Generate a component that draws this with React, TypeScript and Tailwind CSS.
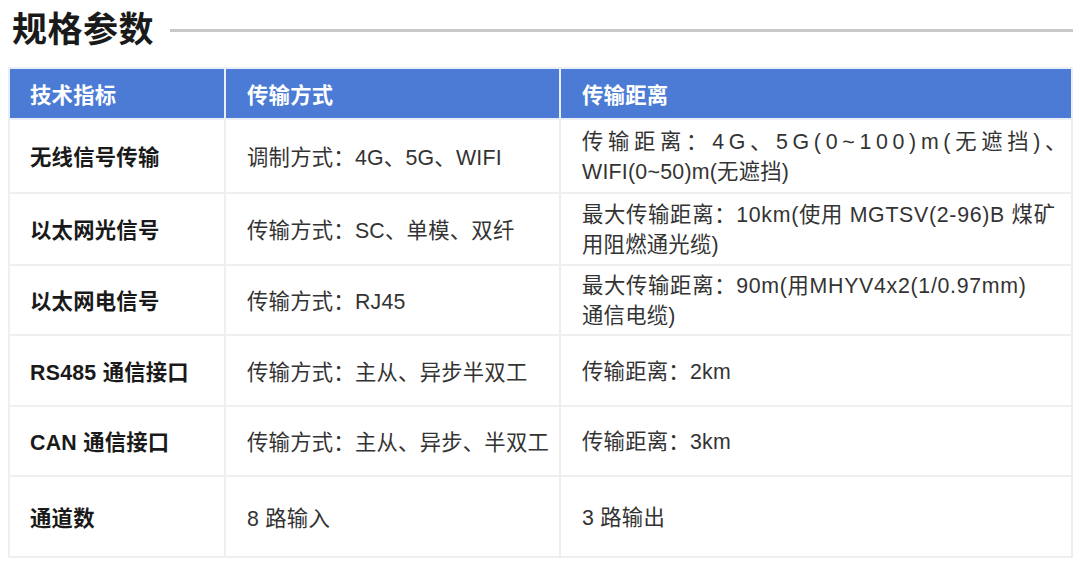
import React from 'react';

const rows = [
  {
    name: '无线信号传输',
    mode: '调制方式：4G、5G、WIFI',
    dist: (
      <>
        <span className="tracking-[4.7px]">传输距离：4G、5G(0~100)m(无遮挡)、</span>
        <br />
        WIFI(0~50)m(无遮挡)
      </>
    ),
    h: 'h-[74px]',
  },
  {
    name: '以太网光信号',
    mode: '传输方式：SC、单模、双纤',
    dist: (
      <>
        <span className="tracking-[0.7px]">最大传输距离：10km(使用 MGTSV(2-96)B 煤矿</span>
        <br />
        用阻燃通光缆)
      </>
    ),
    h: 'h-[72px]',
  },
  {
    name: '以太网电信号',
    mode: '传输方式：RJ45',
    dist: (
      <>
        <span className="tracking-[0.7px]">最大传输距离：90m(用MHYV4x2(1/0.97mm)</span>
        <br />
        通信电缆)
      </>
    ),
    h: 'h-[70px]',
  },
  { name: 'RS485 通信接口', mode: '传输方式：主从、异步半双工', dist: '传输距离：2km', h: 'h-[71px]' },
  { name: 'CAN 通信接口', mode: '传输方式：主从、异步、半双工', dist: '传输距离：3km', h: 'h-[70px]' },
  { name: '通道数', mode: '8 路输入', dist: '3 路输出', h: 'h-[81px]' },
];

export default function App() {
  return (
    <div className="w-[1080px] h-[565px] bg-white font-['Liberation_Sans','Noto_Sans_CJK_SC',sans-serif] text-[#333]">
      <div className="flex items-center pl-[12px] pr-[7px] pt-[8px] h-[50px]">
        <h1 className="text-[35px] font-bold leading-none text-[#1a1a1a] tracking-[0.5px]">规格参数</h1>
        <div className="flex-1 ml-[16px] mt-[3px] h-[3px] bg-[#c8c8c8]" />
      </div>

      <table className="ml-[8px] mt-[17px] w-[1065px] table-fixed border-collapse text-[21.33px] leading-[30px] tracking-[0.25px]">
        <colgroup>
          <col className="w-[216px]" />
          <col className="w-[335px]" />
          <col />
        </colgroup>
        <thead>
          <tr className="h-[51px] bg-[#4b7bd5] text-white">
            <th className="border-2 border-[#eaeef7] pl-[20px] pt-[4px] text-left font-bold">技术指标</th>
            <th className="border-2 border-[#eaeef7] pl-[21px] pt-[4px] text-left font-bold">传输方式</th>
            <th className="border-2 border-[#eaeef7] pl-[21px] pt-[4px] text-left font-bold">传输距离</th>
          </tr>
        </thead>
        <tbody>
          {rows.map((r) => (
            <tr key={r.name} className={r.h}>
              <td className="border-2 border-[#efefef] pl-[20px] pt-[4px] align-middle font-bold text-[#1a1a1a]">
                {r.name}
              </td>
              <td className="border-2 border-[#efefef] pl-[21px] pt-[4px] align-middle whitespace-nowrap">{r.mode}</td>
              <td className="border-2 border-[#efefef] pl-[21px] pr-[8px] pt-[2px] align-middle whitespace-nowrap">
                {r.dist}
              </td>
            </tr>
          ))}
        </tbody>
      </table>
    </div>
  );
}
